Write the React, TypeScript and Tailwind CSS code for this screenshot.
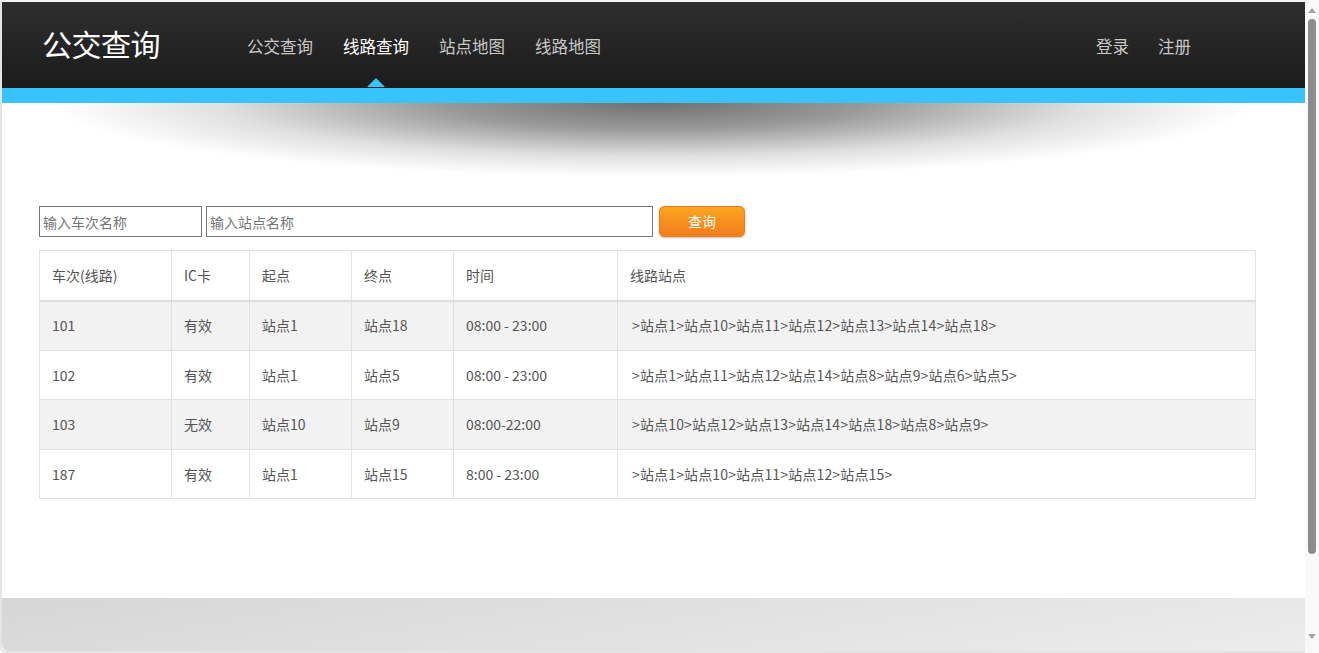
import React from "react";

const rows = [
  ["101", "有效", "站点1", "站点18", "08:00 - 23:00", ">站点1>站点10>站点11>站点12>站点13>站点14>站点18>"],
  ["102", "有效", "站点1", "站点5", "08:00 - 23:00", ">站点1>站点11>站点12>站点14>站点8>站点9>站点6>站点5>"],
  ["103", "无效", "站点10", "站点9", "08:00-22:00", ">站点10>站点12>站点13>站点14>站点18>站点8>站点9>"],
  ["187", "有效", "站点1", "站点15", "8:00 - 23:00", ">站点1>站点10>站点11>站点12>站点15>"],
];

const cols = ["w-[132px]", "w-[78px]", "w-[102px]", "w-[102px]", "w-[164px]", "w-[638px]"];
const heads = ["车次(线路)", "IC卡", "起点", "终点", "时间", "线路站点"];
const rowH = ["h-[50px]", "h-[49px]", "h-[50px]", "h-[49px]"];

const font = "font-['Noto_Sans_CJK_SC','Noto_Sans',sans-serif]";

export default function App() {
  return (
    <div className={`w-[1319px] h-[653px] overflow-hidden flex bg-white ${font}`}>
      <div className="w-[1305px] h-[653px] flex flex-col border-l-2 border-t-2 border-b-2 border-l-[#e4e4e4] border-t-[#f4f4f4] border-b-[#e4e4e4] rounded-bl-[6px] overflow-hidden">
        {/* header */}
        <div className="h-[86px] shrink-0 bg-[linear-gradient(#2e2e2e,#1b1b1b)] flex items-center pl-[40px]">
          <div className="text-white text-[30px] leading-none tracking-[-0.5px] w-[205px] -mt-[5px]">公交查询</div>
          <nav className="flex gap-[30px] text-[16.5px] leading-none mt-[3px]">
            <span className="text-[#c8c8c8]">公交查询</span>
            <span className="text-white relative">
              线路查询
              <span className="absolute left-1/2 -translate-x-1/2 top-[40px] w-0 h-0 border-l-[9px] border-r-[9px] border-b-[9px] border-l-transparent border-r-transparent border-b-[#38c3fd]"></span>
            </span>
            <span className="text-[#c8c8c8]">站点地图</span>
            <span className="text-[#c8c8c8]">线路地图</span>
          </nav>
          <div className="ml-auto mr-[114px] flex gap-[29px] text-[16.5px] leading-none text-[#c8c8c8] mt-[3px]">
            <span>登录</span>
            <span>注册</span>
          </div>
        </div>
        <div className="h-[15px] shrink-0 bg-[#38c3fd]"></div>
        <div className="h-[103px] shrink-0 bg-[radial-gradient(ellipse_600px_74px_at_50%_0%,rgba(0,0,0,0.56),rgba(0,0,0,0.4)_35%,rgba(0,0,0,0.12)_72%,rgba(0,0,0,0)_100%)]"></div>

        {/* content */}
        <div className="pl-[37px] flex-1">
          <div className="flex items-center h-[31px]">
            <input
              placeholder="输入车次名称"
              className="w-[163px] h-[31px] border border-[#767676] px-[3px] text-[14px] placeholder:text-[#757575] outline-none"
            />
            <input
              placeholder="输入站点名称"
              className="ml-[4px] w-[447px] h-[31px] border border-[#767676] px-[3px] text-[14px] placeholder:text-[#757575] outline-none"
            />
            <button className="ml-[6px] w-[86px] h-[31px] rounded-[5px] border border-[#ec7d1c] bg-[linear-gradient(#fba51f,#f37c1d)] text-white text-[14px] shadow-[0_1px_2px_rgba(0,0,0,0.25)]">
              查询
            </button>
          </div>
          <table className="mt-[13px] w-[1216px] border-collapse text-[14px] text-[#555] table-fixed">
            <thead>
              <tr className="h-[50px]">
                {heads.map((h, i) => (
                  <th key={i} className={`${cols[i]} border border-[#e2e2e2] border-b-2 border-b-[#dddddd] text-left font-normal pl-[12px]`}>
                    {h}
                  </th>
                ))}
              </tr>
            </thead>
            <tbody>
              {rows.map((r, ri) => (
                <tr key={ri} className={`${rowH[ri]} ${ri % 2 === 0 ? "bg-[#f2f2f2]" : "bg-white"}`}>
                  {r.map((c, ci) => (
                    <td key={ci} className={`border border-[#e2e2e2] ${ci === 5 ? "pl-[14px] tracking-[0.15px]" : "pl-[12px]"}`}>
                      {c}
                    </td>
                  ))}
                </tr>
              ))}
            </tbody>
          </table>
        </div>

        {/* footer */}
        <div className="h-[53px] shrink-0 bg-[linear-gradient(170deg,#d6d6d6,#ececec)] rounded-bl-[6px]"></div>
      </div>

      {/* scrollbar */}
      <div className="w-[14px] h-[653px] bg-[#f9f9f9] flex flex-col items-center">
        <svg width="10" height="14" viewBox="0 0 10 14" className="mt-[3px]">
          <path d="M1 10 L5 5 L9 10 Z" fill="#a3a3a3" />
        </svg>
        <div className="mt-[2px] w-[8px] h-[535px] rounded-full bg-[#8d8d8d]"></div>
        <div className="flex-1"></div>
        <svg width="10" height="14" viewBox="0 0 10 14" className="mb-[9px]">
          <path d="M1 4 L5 9 L9 4 Z" fill="#a3a3a3" />
        </svg>
      </div>
    </div>
  );
}
